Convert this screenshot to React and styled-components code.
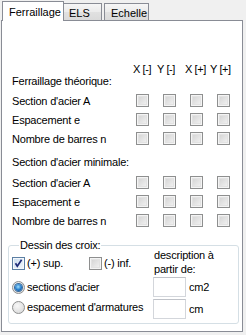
import React from 'react';
import styled, { createGlobalStyle } from 'styled-components';

const GlobalStyle = createGlobalStyle`
  html, body { margin: 0; padding: 0; background: #f0f0f0; }
  body {
    font-family: "Liberation Sans", Arial, sans-serif;
    font-size: 11px;
    letter-spacing: -0.2px;
    color: #000;
  }
`;

const Window = styled.div`
  width: 246px;
  height: 335px;
  background: #f0f0f0;
  box-sizing: border-box;
  padding-left: 1px;
`;

const TabBar = styled.div`
  display: flex;
  align-items: flex-end;
  height: 20px;
  padding-left: 1px;
`;

const Tab = styled.div`
  box-sizing: border-box;
  position: relative;
  width: ${p => p.$w}px;
  margin-left: ${p => p.$ml || 0}px;
  padding-left: ${p => p.$pl}px;
  border: 1px solid #898c95;
  border-bottom: none;
  line-height: 14px;
  white-space: nowrap;
  font-size: 11px;
  letter-spacing: 0;
  ${p => p.$active ? `
    z-index: 1;
    height: 20px;
    margin-bottom: -1px;
    background: #fff;
    padding-top: 3px;
  ` : `
    height: 17px;
    background: linear-gradient(#f6f6f6, #ebebeb 50%, #e1e1e1 50%, #dadada);
    padding-top: 2px;
  `}
`;

const Panel = styled.div`
  box-sizing: border-box;
  width: 242px;
  height: 312px;
  background: #fff;
  border: 1px solid #898c95;
  padding: 42px 4px 0 6px;
`;

const Grid = styled.div`
  display: grid;
  grid-template-columns: 124px repeat(4, 27px);
  padding-left: 4px;
`;

const Header = styled.div`
  height: 12px;
  line-height: 12px;
  white-space: nowrap;
  letter-spacing: -0.4px;
  margin-left: ${p => p.$off || 0}px;
`;

const Title = styled.div`
  grid-column: 1 / -1;
  height: 12px;
  line-height: 12px;
  margin-top: ${p => p.$mt || 0}px;
  margin-bottom: ${p => p.$mb || 0}px;
`;

const Cell = styled.div`
  height: 19px;
  display: flex;
  align-items: center;
  white-space: nowrap;
`;

const Box = styled.span`
  box-sizing: border-box;
  display: inline-block;
  flex: none;
  width: 13px;
  height: 13px;
  border: 1px solid #8e8f8f;
  background: linear-gradient(135deg, #cfcfcf, #f6f6f6);
  box-shadow: inset 0 0 0 1px #f4f4f4, inset 0 0 0 2px #e2e2e2;
`;

const CheckedBox = styled.span`
  box-sizing: border-box;
  display: inline-flex;
  flex: none;
  width: 13px;
  height: 13px;
  border: 1px solid #5c7fa3;
  background: linear-gradient(135deg, #c9dcef, #f2f7fc);
  box-shadow: inset 0 0 0 1px #f4f8fc;
`;

const Radio = styled.span`
  box-sizing: border-box;
  display: inline-flex;
  align-items: center;
  justify-content: center;
  flex: none;
  width: 13px;
  height: 13px;
  border-radius: 50%;
  border: 1px solid #8e8f8f;
  background: radial-gradient(circle at 40% 35%, #f8f8f8, #d4d4d4);
`;

const Dot = styled.span`
  width: 7px;
  height: 7px;
  border-radius: 50%;
  background: radial-gradient(circle at 45% 40%, #9fe0ff, #1f78c8 55%, #0c3f85);
  box-shadow: 0 0 0 1px #3a6b9a;
`;

const Group = styled.fieldset`
  box-sizing: border-box;
  width: 231px;
  margin: 10px 0 0 0;
  padding: 0 0 4px 3px;
  border: 1px solid #d5dfe5;
  border-radius: 3px;
  display: grid;
  grid-template-columns: 141px 1fr;
`;

const Legend = styled.legend`
  margin-left: 7px;
  padding: 0 1px;
  line-height: 11px;
`;

const Left = styled.div`
  display: flex;
  flex-direction: column;
  padding-top: 5px;
`;

const Right = styled.div`
  display: flex;
  flex-direction: column;
  margin-top: -3px;
`;

const Line = styled.div`
  display: flex;
  align-items: center;
  gap: 2px;
  height: ${p => p.$h}px;
  margin-top: ${p => p.$mt || 0}px;
  white-space: nowrap;
`;

const Option = styled.span`
  display: flex;
  align-items: center;
  gap: 2px;
  width: ${p => p.$w || 'auto'};
`;

const Note = styled.div`
  line-height: 14px;
  padding-left: 1px;
`;

const InputRow = styled.div`
  display: flex;
  align-items: center;
  gap: 3px;
  margin-top: ${p => p.$mt}px;
`;

const Field = styled.span`
  box-sizing: border-box;
  display: inline-block;
  width: 33px;
  height: 20px;
  background: #fff;
  border: 1px solid #d3d6db;
  border-top-color: #bfc2c8;
`;

const Check = () => (
  <CheckedBox>
    <svg width="11" height="11" viewBox="0 0 11 11">
      <path d="M2.5 5.2 L4.3 8.2 L8.6 1.8" fill="none" stroke="#1e2b78" strokeWidth="1.7" />
    </svg>
  </CheckedBox>
);

const rows = ["Section d'acier A", 'Espacement e', 'Nombre de barres n'];

const Section = ({ title, mt }) => (
  <>
    <Title $mt={mt} $mb={mt ? 5 : 4}>{title}</Title>
    {rows.map(r => (
      <React.Fragment key={r}>
        <Cell>{r}</Cell>
        <Cell><Box /></Cell>
        <Cell><Box /></Cell>
        <Cell><Box /></Cell>
        <Cell><Box /></Cell>
      </React.Fragment>
    ))}
  </>
);

export default function App() {
  return (
    <Window>
      <GlobalStyle />
      <TabBar>
        <Tab $active $w={62} $pl={6}>Ferraillage</Tab>
        <Tab $w={39} $ml={-1} $pl={5}>ELS</Tab>
        <Tab $w={45} $ml={2} $pl={6}>Echelle</Tab>
      </TabBar>
      <Panel>
        <Grid>
          <Header />
          <Header $off={-3}>X [-]</Header>
          <Header $off={-6}>Y [-]</Header>
          <Header $off={-5}>X [+]</Header>
          <Header $off={-7}>Y [+]</Header>
          <Section title="Ferraillage théorique:" />
          <Section title="Section d'acier minimale:" mt={8} />
        </Grid>
        <Group>
          <Legend>Dessin des croix:</Legend>
          <Left>
            <Line $h={14}>
              <Option $w="75px"><Check />(+) sup.</Option>
              <Option><Box />(-) inf.</Option>
            </Line>
            <Line $h={20} $mt={7}><Radio><Dot /></Radio>sections d'acier</Line>
            <Line $h={20}><Radio />espacement d'armatures</Line>
          </Left>
          <Right>
            <Note>description à</Note>
            <Note>partir de:</Note>
            <InputRow $mt={1}><Field />cm2</InputRow>
            <InputRow $mt={2}><Field />cm</InputRow>
          </Right>
        </Group>
      </Panel>
    </Window>
  );
}
